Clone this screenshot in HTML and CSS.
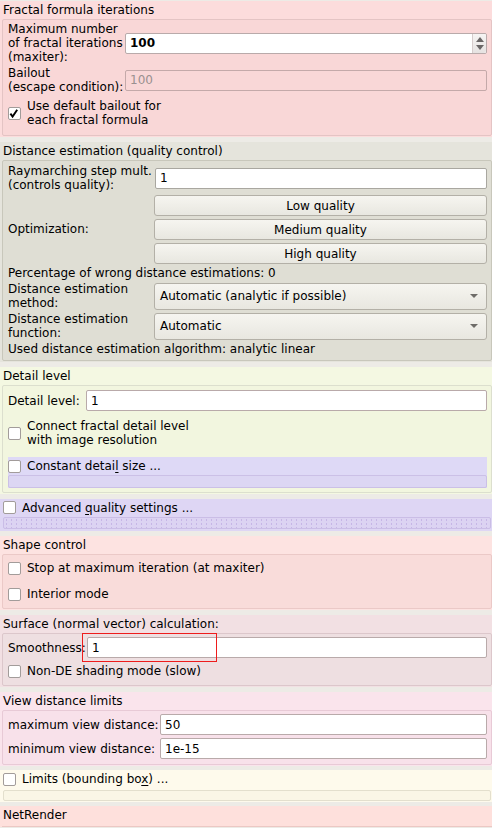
FILE: index.html
```html
<!DOCTYPE html>
<html>
<head>
<meta charset="utf-8">
<link rel="stylesheet" href="styles.css">
</head>
<body>

<section class="sec sec-iter">
  <div class="title">Fractal formula iterations</div>
  <div class="box box-iter">
    <div class="form form-iter">
      <div class="lbl">Maximum number<br>of fractal iterations<br>(maxiter):</div>
      <div class="field spin"><span class="val strong">100</span><span class="spin-btns"><span class="tri-up"></span><span class="tri-down"></span></span></div>
      <div class="lbl">Bailout<br>(escape condition):</div>
      <div class="field field-disabled"><span class="val">100</span></div>
    </div>
    <div class="check check-iter">
      <span class="cb"><svg width="13" height="13" viewBox="0 0 13 13"><path d="M2.4 6.6 L4.6 9.6 L9.2 2.8" fill="none" stroke="#000" stroke-width="1.9"/></svg></span>
      <span>Use default bailout for<br>each fractal formula</span>
    </div>
  </div>
</section>

<section class="sec sec-de">
  <div class="title">Distance estimation (quality control)</div>
  <div class="box box-de">
    <div class="form form-de">
      <div class="lbl">Raymarching step mult.<br>(controls quality):</div>
      <div class="field field-de"><span class="val">1</span></div>
      <div class="lbl">Optimization:</div>
      <div class="btns">
        <div class="btn">Low quality</div>
        <div class="btn">Medium quality</div>
        <div class="btn">High quality</div>
      </div>
      <div class="full">Percentage of wrong distance estimations: 0</div>
      <div class="lbl">Distance estimation<br>method:</div>
      <div class="combo"><span>Automatic (analytic if possible)</span><span class="arrow"></span></div>
      <div class="lbl">Distance estimation<br>function:</div>
      <div class="combo"><span>Automatic</span><span class="arrow"></span></div>
      <div class="full">Used distance estimation algorithm: analytic linear</div>
    </div>
  </div>
</section>

<section class="sec sec-detail">
  <div class="title">Detail level</div>
  <div class="box box-detail">
    <div class="row row-detail">
      <div class="lbl lbl-detail">Detail level:</div>
      <div class="field grow"><span class="val">1</span></div>
    </div>
    <div class="check check-connect">
      <span class="cb"></span>
      <span>Connect fractal detail level<br>with image resolution</span>
    </div>
    <div class="lav-block">
      <div class="check"><span class="cb"></span><span>Constant detai<u>l</u> size ...</span></div>
      <div class="bar bar-lav"></div>
    </div>
  </div>
</section>

<section class="sec sec-adv">
  <div class="check"><span class="cb"></span><span>Advanced <u>q</u>uality settings ...</span></div>
  <div class="bar bar-adv"></div>
</section>

<section class="sec sec-shape">
  <div class="title">Shape control</div>
  <div class="box box-shape">
    <div class="check"><span class="cb"></span><span>Stop at maximum iteration (at maxiter)</span></div>
    <div class="check check-gap"><span class="cb"></span><span>Interior mode</span></div>
  </div>
</section>

<section class="sec sec-surf">
  <div class="title">Surface (normal vector) calculation:</div>
  <div class="box box-surf">
    <div class="row row-smooth">
      <div class="lbl lbl-smooth">Smoothness:</div>
      <div class="field grow"><span class="val">1</span></div>
      <span class="highlight"></span>
    </div>
    <div class="check check-nonde"><span class="cb"></span><span>Non-DE shading mode (slow)</span></div>
  </div>
</section>

<section class="sec sec-view">
  <div class="title">View distance limits</div>
  <div class="box box-view">
    <div class="row">
      <div class="lbl lbl-view">maximum view distance:</div>
      <div class="field grow"><span class="val">50</span></div>
    </div>
    <div class="row row-gap3">
      <div class="lbl lbl-view">minimum view distance:</div>
      <div class="field grow"><span class="val">1e-15</span></div>
    </div>
  </div>
</section>

<section class="sec sec-limits">
  <div class="check"><span class="cb"></span><span>Limits (bounding bo<u>x</u>) ...</span></div>
  <div class="bar bar-limits"></div>
</section>

<section class="sec sec-net">
  <div class="title title-net">NetRender</div>
  <div class="box box-net"></div>
</section>

</body>
</html>
```

FILE: styles.css
```css
* { box-sizing: border-box; }
html, body { margin: 0; }
body {
  width: 492px;
  height: 828px;
  overflow: hidden;
  padding-top: 1px;
  background: #edebe6;
  font-family: "DejaVu Sans", "Liberation Sans", sans-serif;
  font-size: 12px;
  line-height: 14px;
  color: #000;
}
u { text-decoration: underline; text-underline-offset: 2px; }

.sec { padding-bottom: 1px; margin-bottom: 5px; }
.title { height: 18px; line-height: 18px; padding-left: 3px; white-space: nowrap; }
.box {
  margin-left: 2px;
  width: 490px;
  border: 1px solid;
  border-radius: 2px;
  padding: 2px 4px 4px 5px;
}
.lbl { white-space: nowrap; }

/* fields */
.field {
  height: 21px;
  display: flex;
  align-items: center;
  background: #fff;
  border: 1px solid #b9aaaa;
  border-radius: 2px;
  padding: 0 4px;
}
.field .val { flex: 1; }
.strong { font-weight: bold; }
.grow { flex: 1; }
.spin { padding-right: 0; }
.spin-btns {
  width: 14px;
  height: 100%;
  border-left: 1px solid #d6cccc;
  background: linear-gradient(#f6f4f3, #e6e2e1);
  display: flex;
  flex-direction: column;
  align-items: center;
  justify-content: center;
  gap: 3px;
  border-radius: 0 2px 2px 0;
}
.tri-up { width: 0; height: 0; border-left: 4px solid transparent; border-right: 4px solid transparent; border-bottom: 5px solid #6a6666; }
.tri-down { width: 0; height: 0; border-left: 4px solid transparent; border-right: 4px solid transparent; border-top: 5px solid #6a6666; }
.field-disabled { background: transparent; border-color: #c4a9a9; color: #9a9090; }

/* checkboxes */
.check { display: flex; align-items: center; gap: 6px; min-height: 16px; white-space: nowrap; }
.cb {
  width: 13px;
  height: 13px;
  flex: none;
  background: #fff;
  border: 1px solid #a29c9a;
  border-radius: 2px;
  display: flex;
  align-items: center;
  justify-content: center;
}
.cb svg { display: block; margin: -1px; }

/* section 1 */
.sec-iter { background: #fcdcdc; }
.box-iter { background: #f9d7d7; border-color: #e4c4c4; padding: 2px 4px 8px 5px; }
.form-iter { display: grid; grid-template-columns: 117px 1fr; row-gap: 2px; align-items: center; }
.check-iter { margin-top: 5px; }

/* section 2 */
.sec-de { background: #e5e4dc; }
.box-de { background: #dfded4; border-color: #c8c7bb; padding: 3px 4px 4px 5px; }
.form-de { display: grid; grid-template-columns: 146px 1fr; row-gap: 2px; align-items: center; }
.field-de { margin-left: 1px; border-color: #a9a7a0; }
.full { grid-column: 1 / 3; white-space: nowrap; }
.btns { display: flex; flex-direction: column; gap: 3px; padding-top: 1px; }
.btn, .combo {
  height: 21px;
  border: 1px solid #b3b0a7;
  border-radius: 3px;
  background: linear-gradient(#f6f5f0, #e8e7e0);
  display: flex;
  align-items: center;
}
.btn { justify-content: center; }
.combo { height: 27px; padding: 0 5px 0 5px; justify-content: space-between; }
.arrow {
  width: 0; height: 0;
  margin-right: 3px;
  border-left: 4px solid transparent;
  border-right: 4px solid transparent;
  border-top: 4px solid #6e6c68;
}

/* section 3 */
.sec-detail { background: #f4f8e2; }
.box-detail { background: #f2f6df; border-color: #dcdfce; padding: 4px 4px 4px 5px; }
.row { display: flex; align-items: center; }
.lbl-detail { width: 78px; }
.check-connect { margin-top: 8px; }
.lav-block { margin-top: 10px; background: #ded9f6; padding-top: 1px; }
.bar { border: 1px solid; border-radius: 2px; }
.bar-lav {
  margin-top: 1px;
  height: 13px;
  border-color: #cbc0e6;
  background: #dcd6f3;
}

/* advanced */
.sec-adv { background: #ded6f4; padding: 1px 1px 2px 3px; margin-bottom: 5px; }
.sec-adv .check { min-height: 15px; }
.bar-adv {
  margin-top: 2px;
  height: 12px;
  border-color: #cabde6;
  background: #dcd3f2;
  background-image: radial-gradient(circle, #c6b6e6 0.7px, transparent 1px);
  background-size: 5px 4px;
}

/* shape control */
.sec-shape { background: #fde3e1; }
.box-shape { background: #f9dcda; border-color: #ebc9c7; padding: 5px 4px 6px 5px; }
.check-gap { margin-top: 10px; }

/* surface */
.sec-surf { background: #f2e0e3; }
.box-surf { background: #eedfe1; border-color: #dcc7cb; padding: 3px 4px 6px 5px; }
.row-smooth { position: relative; }
.lbl-smooth { width: 79px; }
.highlight {
  position: absolute;
  left: 74px;
  top: -4px;
  width: 135px;
  height: 29px;
  border: 1px solid #ee1c1c;
}
.check-nonde { margin-top: 5px; }

/* view */
.sec-view { background: #fae4ec; margin-bottom: 4px; }
.box-view { background: #f8e1ea; border-color: #e8cad6; padding: 3px 4px 5px 5px; }
.lbl-view { width: 152px; }
.row-gap3 { margin-top: 3px; }

/* limits */
.sec-limits { background: #fefaec; padding: 1px 1px 1px 3px; margin-bottom: 4px; }
.bar-limits {
  margin-top: 3px;
  height: 11px;
  border-color: #e3dfcd;
  background: #faf6e6;
}

/* netrender */
.sec-net { background: #fee0dc; margin-bottom: 0; padding-bottom: 0; }
.title-net { height: 20px; line-height: 18px; }
.box-net { height: 1px; border-width: 1px 1px 0 1px; padding: 0; background: #fbdad6; border-color: #ecc8c4; }
```
